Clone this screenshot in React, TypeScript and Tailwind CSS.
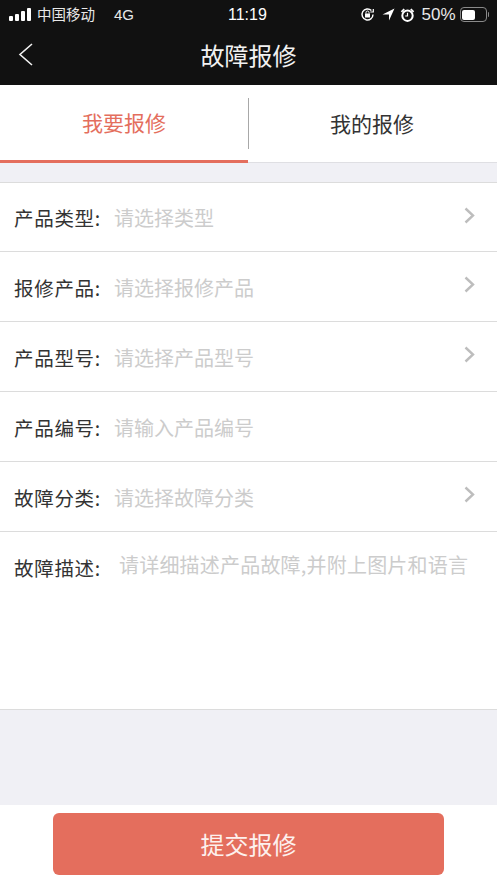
const cjk = "font-['Noto_Sans_CJK_SC','Liberation_Sans',sans-serif]";

const rows = [
  { label: "产品类型:", hint: "请选择类型", arrow: true },
  { label: "报修产品:", hint: "请选择报修产品", arrow: true },
  { label: "产品型号:", hint: "请选择产品型号", arrow: true },
  { label: "产品编号:", hint: "请输入产品编号", arrow: false },
  { label: "故障分类:", hint: "请选择故障分类", arrow: true },
];

function StatusBar() {
  return (
    <div className="relative flex h-[29px] items-center pl-[9px] pr-[8px] text-[#e8e8e8]">
      <div className="flex items-end gap-[2px]">
        <span className="h-[5px] w-[4px] rounded-[1px] bg-white" />
        <span className="h-[7px] w-[4px] rounded-[1px] bg-white" />
        <span className="h-[10px] w-[4px] rounded-[1px] bg-white" />
        <span className="h-[13px] w-[4px] rounded-[1px] bg-white" />
      </div>
      <span className="ml-[6px] text-[14.5px] leading-none">中国移动</span>
      <span className="ml-[19px] font-['Liberation_Sans'] text-[15px] leading-none">4G</span>
      <span className="absolute left-[228px] font-['Liberation_Sans'] text-[16px] leading-none text-white">11:19</span>
      <div className="ml-auto flex items-center">
        <svg width="15" height="15" viewBox="0 0 15 15" fill="none" stroke="white" strokeWidth="1.4">
          <path d="M13 7.5a5.5 5.5 0 1 1-1.6-3.9" />
          <path d="M13.3 2v3h-3" strokeWidth="1.2" />
          <rect x="5" y="6.5" width="5" height="4" fill="white" stroke="none" />
          <path d="M6 6.5V5.5a1.5 1.5 0 0 1 3 0v1" strokeWidth="1" />
        </svg>
        <svg className="ml-[7px]" width="13" height="13" viewBox="0 0 13 13" fill="white">
          <path d="M12.5 .5 7 12.5V6.5H.5z" />
        </svg>
        <svg className="ml-[5px]" width="15" height="16" viewBox="0 0 15 16">
          <circle cx="7.5" cy="8.7" r="5.2" fill="none" stroke="white" strokeWidth="2" />
          <path d="M7.5 5.8v3.2H5.2" fill="none" stroke="white" strokeWidth="1.2" />
          <path d="M.8 4.2 3.6 1.4 4.8 2.6 2 5.4zM14.2 4.2 11.4 1.4 10.2 2.6 13 5.4z" fill="white" />
        </svg>
        <span className="ml-[6px] font-['Liberation_Sans'] text-[17px] leading-none">50%</span>
        <div className="ml-[4px] flex items-center">
          <div className="h-[15px] w-[27px] rounded-[4px] border border-[#8a8a8a] p-[1.5px]">
            <div className="h-full w-[13px] rounded-[2px] bg-white" />
          </div>
          <span className="ml-[1px] h-[5px] w-[1.5px] rounded-r-sm bg-[#8a8a8a]" />
        </div>
      </div>
    </div>
  );
}

function Header() {
  return (
    <div className="bg-[#111111]">
      <StatusBar />
      <div className="relative flex h-[56px] items-start justify-center">
        <svg className="absolute left-[18px] top-[14px]" width="15" height="23" viewBox="0 0 15 23" fill="none" stroke="#f2f2f2" strokeWidth="1.6">
          <path d="M14 1 2 11.5 14 22" />
        </svg>
        <span className="mt-[9px] text-[24px] leading-[34px] text-[#f2f2f2]">故障报修</span>
      </div>
    </div>
  );
}

function Tabs() {
  return (
    <div className="flex h-[78px] border-b border-[#dfdfe3] bg-white">
      <div className="-mb-px flex w-[248px] items-center justify-center border-b-[3px] border-[#e46e5d]">
        <span className="text-[21px] leading-none text-[#e46e5d]">我要报修</span>
      </div>
      <div className="mt-[13px] h-[51px] w-px bg-[#a8a8a8]" />
      <div className="flex flex-1 items-center justify-center">
        <span className="pr-[2px] text-[21px] leading-none text-[#333333]">我的报修</span>
      </div>
    </div>
  );
}

function Row({ label, hint, arrow }: { label: string; hint: string; arrow: boolean }) {
  return (
    <div className="flex h-[70px] items-center border-b border-[#dcdcdc] pl-[14px] pr-[22px] pt-[2px] first:h-[69px]">
      <span className="w-[100px] text-[19.5px] leading-none tracking-[0.7px] text-[#333333]">{label}</span>
      <span className="flex-1 text-[20px] leading-none text-[#cccccc]">{hint}</span>
      {arrow && (
        <svg className="mb-[6px]" width="11" height="17" viewBox="0 0 11 17" fill="none" stroke="#bdbdbd" strokeWidth="2.4">
          <path d="M1.5 1.5 9 8.5 1.5 15.5" />
        </svg>
      )}
    </div>
  );
}

export default function App() {
  return (
    <div className={`flex h-[883px] w-[497px] flex-col overflow-hidden bg-[#f0f0f5] ${cjk}`}>
      <Header />
      <Tabs />
      <div className="mt-[19px] border-t border-[#dcdcdc] bg-white">
        {rows.map((r) => (
          <Row key={r.label} label={r.label} hint={r.hint} arrow={r.arrow} />
        ))}
        <div className="flex h-[178px] items-start border-b border-[#dcdcdc] pl-[14px] pt-[26px]">
          <span className="w-[105px] text-[19.5px] leading-none tracking-[0.7px] text-[#333333]">故障描述:</span>
          <span className="-mt-[3px] text-[20px] leading-none tracking-[0.2px] text-[#cccccc]">请详细描述产品故障,并附上图片和语言</span>
        </div>
      </div>
      <div className="mt-auto flex h-[78px] justify-center bg-white pt-[8px]">
        <button className="h-[62px] w-[391px] rounded-[6px] bg-[#e46e5d] text-[24px] text-[#fdf1ee]">提交报修</button>
      </div>
    </div>
  );
}
